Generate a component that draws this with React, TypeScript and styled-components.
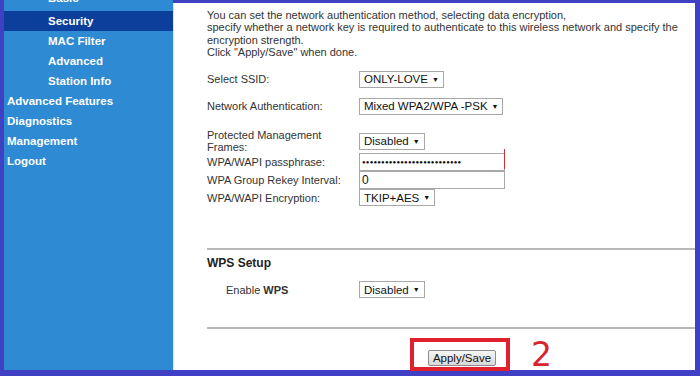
import * as React from 'react'
import styled, { createGlobalStyle } from 'styled-components'

const GlobalStyle = createGlobalStyle`
  html, body {
    margin: 0;
    padding: 0;
    background: #4040c4;
  }
  body {
    font-family: "Liberation Sans", Arial, sans-serif;
  }
`

const Frame = styled.div`
  display: flex;
  width: 700px;
  height: 376px;
  box-sizing: border-box;
  padding: 0 5px 6px 4px;
  background: #4040c4;
  overflow: hidden;
`

const Sidebar = styled.nav`
  width: 169px;
  flex-shrink: 0;
  background: #2d8ad3;
  overflow: hidden;
`

const NavList = styled.ul`
  list-style: none;
  margin: -12px 0 0 0;
  padding: 0;
`

const NavItem = styled.li<{ $sub?: boolean; $active?: boolean }>`
  height: 20px;
  line-height: 20px;
  padding-left: ${p => (p.$sub ? '44px' : '3px')};
  font-size: 11.5px;
  font-weight: bold;
  color: #fff;
  background: ${p => (p.$active ? '#0c3f9c' : 'transparent')};
  white-space: nowrap;

  &:first-child {
    height: 23px;
  }
`

const Content = styled.main`
  flex: 1;
  margin-top: 3px;
  background: #fff;
  border-left: 1px solid #dbe6f2;
  padding: 6px 0 0 33px;
  position: relative;
  color: #333;
  font-size: 11px;
`

const Intro = styled.p`
  margin: 0;
  line-height: 12.3px;
  padding-right: 14px;
`

const Row = styled.div<{ $top: number; $h: number }>`
  display: flex;
  align-items: center;
  margin-top: ${p => p.$top}px;
  height: ${p => p.$h}px;
`

const Label = styled.div<{ $indent?: number }>`
  width: ${p => 152 - (p.$indent || 0)}px;
  padding-left: ${p => p.$indent || 0}px;
  flex-shrink: 0;
  line-height: 12px;
`

const SelectBox = styled.span`
  display: inline-flex;
  align-items: center;
  height: 17px;
  box-sizing: border-box;
  padding: 0 4px 0 4px;
  border: 1px solid #a8a8a8;
  background: #fff;
  font-size: 11.5px;
  color: #111;
  white-space: nowrap;

  &::after {
    content: '▼';
    font-size: 7px;
    margin-left: 4px;
  }
`

const TextField = styled.span<{ $mark?: boolean }>`
  display: flex;
  align-items: center;
  position: relative;
  width: 146px;
  height: 18px;
  box-sizing: border-box;
  padding-left: 2px;
  border: 1px solid #a8a8a8;
  font-size: 12px;
  color: #111;

  ${p =>
    p.$mark &&
    `
    &::after {
      content: '';
      position: absolute;
      right: -1px;
      top: -5px;
      bottom: 1px;
      width: 1.5px;
      background: #c8323c;
    }
  `}
`

const Dots = styled.span`
  font-size: 6px;
  letter-spacing: 0.2px;
`

const Divider = styled.hr<{ $top: number }>`
  margin: ${p => p.$top}px 0 0 0;
  border: 0;
  height: 2px;
  background: #b8b8b8;
`

const SectionTitle = styled.div`
  margin-top: 6px;
  font-size: 12px;
  font-weight: bold;
  color: #222;
  line-height: 14px;
`

const Actions = styled.div`
  display: flex;
  padding-left: 221px;
  margin-top: 21px;
`

const Button = styled.button`
  width: 68px;
  height: 16px;
  padding: 0;
  border: 1px solid #8c8c8c;
  border-radius: 2px;
  background: linear-gradient(#f6f6f6, #d8d8d8);
  font-family: "Liberation Sans", Arial, sans-serif;
  font-size: 11.5px;
  color: #111;
  line-height: 14px;
  white-space: nowrap;
`

const Highlight = styled.div`
  position: absolute;
  left: 236px;
  top: 335px;
  width: 100px;
  height: 33px;
  box-sizing: border-box;
  border: 4px solid #e0202c;
`

const StepNumber = styled.div`
  position: absolute;
  left: 357px;
  top: 332px;
  font-family: "DejaVu Sans", sans-serif;
  font-size: 33px;
  line-height: 40px;
  color: #d8222e;
`

const subItems = ['Basic', 'Security', 'MAC Filter', 'Advanced', 'Station Info']
const mainItems = ['Advanced Features', 'Diagnostics', 'Management', 'Logout']

const App: React.FC = () => (
  <>
    <GlobalStyle />
    <Frame>
      <Sidebar>
        <NavList>
          {subItems.map(item => (
            <NavItem key={item} $sub $active={item === 'Security'}>
              {item}
            </NavItem>
          ))}
          {mainItems.map(item => (
            <NavItem key={item}>{item}</NavItem>
          ))}
        </NavList>
      </Sidebar>
      <Content>
        <Intro>
          You can set the network authentication method, selecting data encryption,
          <br />
          specify whether a network key is required to authenticate to this wireless network and specify the
          encryption strength.
          <br />
          Click "Apply/Save" when done.
        </Intro>
        <Row $top={12} $h={18}>
          <Label>Select SSID:</Label>
          <SelectBox>ONLY-LOVE</SelectBox>
        </Row>
        <Row $top={9} $h={18}>
          <Label>Network Authentication:</Label>
          <SelectBox>Mixed WPA2/WPA -PSK</SelectBox>
        </Row>
        <Row $top={14} $h={24}>
          <Label>
            Protected Management
            <br />
            Frames:
          </Label>
          <SelectBox>Disabled</SelectBox>
        </Row>
        <Row $top={0} $h={18}>
          <Label>WPA/WAPI passphrase:</Label>
          <TextField $mark>
            <Dots>{'●'.repeat(26)}</Dots>
          </TextField>
        </Row>
        <Row $top={0} $h={18}>
          <Label>WPA Group Rekey Interval:</Label>
          <TextField>0</TextField>
        </Row>
        <Row $top={0} $h={17}>
          <Label>WPA/WAPI Encryption:</Label>
          <SelectBox>TKIP+AES</SelectBox>
        </Row>
        <Divider $top={42} />
        <SectionTitle>WPS Setup</SectionTitle>
        <Row $top={11} $h={17}>
          <Label $indent={19}>
            Enable <b>WPS</b>
          </Label>
          <SelectBox>Disabled</SelectBox>
        </Row>
        <Divider $top={29} />
        <Actions>
          <Button>Apply/Save</Button>
        </Actions>
        <Highlight />
        <StepNumber>2</StepNumber>
      </Content>
    </Frame>
  </>
)

export default App
